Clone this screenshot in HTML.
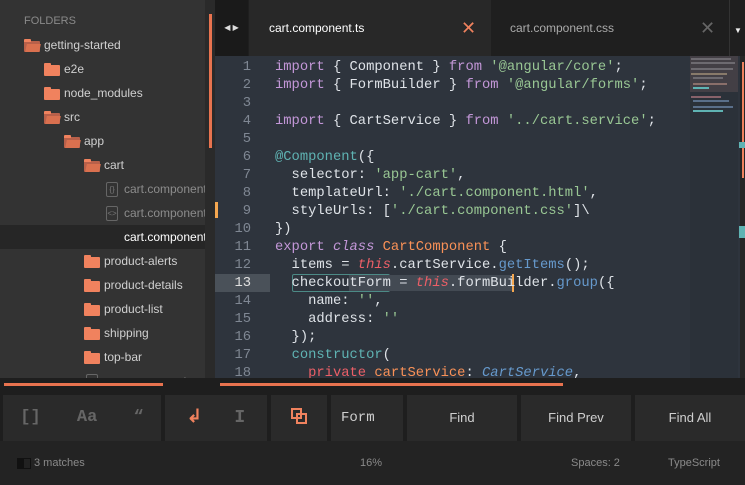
<!DOCTYPE html>
<html><head><style>
*{margin:0;padding:0;box-sizing:border-box}
body{width:745px;height:479px;overflow:hidden;background:#232323;font-family:"Liberation Sans",sans-serif;position:relative}
.abs{position:absolute}
#side{left:0;top:0;width:205px;height:382px;background:#333333;overflow:hidden}
.row{position:absolute;left:0;width:205px;height:24px;font-size:12px;color:#d0d0d0;white-space:nowrap;line-height:24px}
.fold{position:absolute;top:8px;width:16px;height:11px;background:#f0825e;border-radius:1px}
.fold:before{content:"";position:absolute;left:0;top:-2px;width:7px;height:3px;background:#f0825e;border-radius:1px 1px 0 0}
.open{background:#b8604a}
.open:after{content:"";position:absolute;left:2px;top:3px;width:14px;height:8px;background:#d9704f;transform:skewX(-12deg)}
.file{position:absolute;top:5px;width:12px;height:15px;border:1px solid #666;border-radius:2px;font-size:8px;color:#777;text-align:center;line-height:13px}
#code{left:215px;top:56px;width:530px;height:322px;background:#2e343d;overflow:hidden}
.ln{position:absolute;left:0;width:36px;text-align:right;font-family:"Liberation Mono",monospace;font-size:13.8px;color:#7f8793}
.cl{position:absolute;left:60px;font-family:"Liberation Mono",monospace;font-size:13.8px;color:#dfe3e8;white-space:pre}
.k{color:#c397d8}.s{color:#99c794}.r{color:#ec5f67;font-style:italic}.o{color:#f99157}.t{color:#5fb3b3}.b{color:#6699cc}.bi{color:#6699cc;font-style:italic}.p{color:#ec5f67}
.btn{position:absolute;top:395px;height:46px;background:#2a2a2a}
.bt{color:#cfcfcf;font-size:13px;text-align:center;line-height:46px}
.mm{position:absolute;height:2px;background:#6d6a70}
</style></head><body>
<div id="side" class="abs">
<div class="row" style="top:9px;left:24px;color:#8a8a8a;font-size:11px">FOLDERS</div>
<div class="row" style="top:33px"><div class="fold open" style="left:24px"></div><span style="position:absolute;left:44px">getting-started</span></div>
<div class="row" style="top:57px"><div class="fold" style="left:44px"></div><span style="position:absolute;left:64px">e2e</span></div>
<div class="row" style="top:81px"><div class="fold" style="left:44px"></div><span style="position:absolute;left:64px">node_modules</span></div>
<div class="row" style="top:105px"><div class="fold open" style="left:44px"></div><span style="position:absolute;left:64px">src</span></div>
<div class="row" style="top:129px"><div class="fold open" style="left:64px"></div><span style="position:absolute;left:84px">app</span></div>
<div class="row" style="top:153px"><div class="fold open" style="left:84px"></div><span style="position:absolute;left:104px">cart</span></div>
<div class="row" style="top:177px;color:#8c8c8c"><div class="file" style="left:106px">{}</div><span style="position:absolute;left:124px">cart.component.css</span></div>
<div class="row" style="top:201px;color:#8c8c8c"><div class="file" style="left:106px">&lt;&gt;</div><span style="position:absolute;left:124px">cart.component.html</span></div>
<div class="row" style="top:225px;background:#262626;color:#fff"><span style="position:absolute;left:124px">cart.component.ts</span></div>
<div class="row" style="top:249px"><div class="fold" style="left:84px"></div><span style="position:absolute;left:104px">product-alerts</span></div>
<div class="row" style="top:273px"><div class="fold" style="left:84px"></div><span style="position:absolute;left:104px">product-details</span></div>
<div class="row" style="top:297px"><div class="fold" style="left:84px"></div><span style="position:absolute;left:104px">product-list</span></div>
<div class="row" style="top:321px"><div class="fold" style="left:84px"></div><span style="position:absolute;left:104px">shipping</span></div>
<div class="row" style="top:345px"><div class="fold" style="left:84px"></div><span style="position:absolute;left:104px">top-bar</span></div>
<div class="row" style="top:369px;color:#777"><div class="file" style="left:86px">{}</div><span style="position:absolute;left:104px">app.component.css</span></div>
</div>
<div class="abs" style="left:205px;top:0;width:10px;height:382px;background:#2a2a2a"></div>
<div class="abs" style="left:209px;top:14px;width:3px;height:134px;background:#e8734f"></div>
<!-- tabs -->
<div class="abs" style="left:215px;top:0;width:530px;height:56px;background:#1f1f1f"></div>
<div class="abs" style="left:215px;top:0;width:33px;height:56px;background:#1a1a1a;color:#ddd;font-size:8px;line-height:56px;text-align:center">◀ ▶</div>
<div class="abs" style="left:249px;top:0;width:242px;height:56px;background:#282828;color:#fff;font-size:12px;line-height:56px;padding-left:20px">cart.component.ts<span style="position:absolute;left:212px;color:#f0825e;font-size:18px">✕</span></div>
<div class="abs" style="left:510px;top:0;color:#aaa;font-size:12px;line-height:56px">cart.component.css</div>
<div class="abs" style="left:700px;top:0;color:#666;font-size:18px;line-height:56px">✕</div>
<div class="abs" style="left:729px;top:0;width:1px;height:56px;background:#333"></div>
<div class="abs" style="left:734px;top:26px;color:#eee;font-size:8px">▼</div>
<!-- code -->
<div id="code" class="abs">
<div class="abs" style="left:0;top:218px;width:55px;height:18px;background:#4a5159"></div>
<div class="abs" style="left:0;top:146px;width:3px;height:16px;background:#f5a750"></div>
<div class="abs" style="left:77px;top:218px;width:98px;height:18px;border:1px solid #4c8a86;border-radius:2px"></div>
<div class="abs" style="left:134px;top:219px;width:164px;height:16px;background:#434a53"></div>
<div class="abs" style="left:297px;top:218px;width:2px;height:18px;background:#f5a750"></div>
<div class="abs" style="left:475px;top:0;width:48px;height:322px;background:#2b3139"></div>
<div class="abs" style="left:475px;top:0;width:48px;height:36px;background:#433f45"></div>
<div class="mm" style="left:476px;top:2px;width:40px"></div>
<div class="mm" style="left:476px;top:6px;width:44px"></div>
<div class="mm" style="left:476px;top:12px;width:42px"></div>
<div class="mm" style="left:476px;top:17px;width:36px;background:#887a6a"></div>
<div class="mm" style="left:478px;top:21px;width:30px"></div>
<div class="mm" style="left:478px;top:27px;width:34px;background:#8a6f6a"></div>
<div class="mm" style="left:478px;top:31px;width:16px;background:#5fb3b3"></div>
<div class="mm" style="left:476px;top:40px;width:30px;background:#88626a"></div>
<div class="mm" style="left:478px;top:44px;width:36px;background:#5a6f8a"></div>
<div class="mm" style="left:478px;top:50px;width:40px;background:#5a6f8a"></div>
<div class="mm" style="left:478px;top:54px;width:30px;background:#5fb3b3"></div>
<div class="abs" style="left:525px;top:0;width:5px;height:322px;background:#262626"></div>
<div class="abs" style="left:527px;top:6px;width:2px;height:116px;background:#f0825e"></div>
<div class="abs" style="left:524px;top:86px;width:6px;height:6px;background:#5fb3b3"></div>
<div class="abs" style="left:524px;top:170px;width:6px;height:12px;background:#5fb3b3"></div>
<div style="position:absolute;left:0;top:2px;width:475px;height:340px">
<div class="ln" style="top:2px">1</div><div class="ln" style="top:20px">2</div><div class="ln" style="top:38px">3</div><div class="ln" style="top:56px">4</div><div class="ln" style="top:74px">5</div><div class="ln" style="top:92px">6</div><div class="ln" style="top:110px">7</div><div class="ln" style="top:128px">8</div><div class="ln" style="top:146px">9</div><div class="ln" style="top:164px">10</div><div class="ln" style="top:182px">11</div><div class="ln" style="top:200px">12</div><div class="ln" style="top:218px;color:#e0e0e0">13</div><div class="ln" style="top:236px">14</div><div class="ln" style="top:254px">15</div><div class="ln" style="top:272px">16</div><div class="ln" style="top:290px">17</div><div class="ln" style="top:308px">18</div>
<div class="cl" style="top:2px"><span class="k">import</span> { Component } <span class="k">from</span> <span class="s">'@angular/core'</span>;</div>
<div class="cl" style="top:20px"><span class="k">import</span> { FormBuilder } <span class="k">from</span> <span class="s">'@angular/forms'</span>;</div>
<div class="cl" style="top:56px"><span class="k">import</span> { CartService } <span class="k">from</span> <span class="s">'../cart.service'</span>;</div>
<div class="cl" style="top:92px"><span class="t">@Component</span>({</div>
<div class="cl" style="top:110px">  selector: <span class="s">'app-cart'</span>,</div>
<div class="cl" style="top:128px">  templateUrl: <span class="s">'./cart.component.html'</span>,</div>
<div class="cl" style="top:146px">  styleUrls: [<span class="s">'./cart.component.css'</span>]\</div>
<div class="cl" style="top:164px">})</div>
<div class="cl" style="top:182px"><span class="k">export</span> <span class="k" style="font-style:italic">class</span> <span class="o">CartComponent</span> {</div>
<div class="cl" style="top:200px">  items = <span class="r">this</span>.cartService.<span class="b">getItems</span>();</div>
<div class="cl" style="top:218px">  checkoutForm = <span class="r">this</span>.formBuilder.<span class="b">group</span>({</div>
<div class="cl" style="top:236px">    name: <span class="s">''</span>,</div>
<div class="cl" style="top:254px">    address: <span class="s">''</span></div>
<div class="cl" style="top:272px">  });</div>
<div class="cl" style="top:290px">  <span class="t">constructor</span>(</div>
<div class="cl" style="top:308px">    <span class="p">private</span> <span class="o">cartService</span>: <span class="bi">CartService</span>,</div>
</div>
</div>
<!-- bottom -->
<div class="abs" style="left:0;top:378px;width:745px;height:63px;background:#1e1e1e"></div>
<div class="abs" style="left:4px;top:383px;width:159px;height:3px;background:#e8734f"></div>
<div class="abs" style="left:220px;top:383px;width:343px;height:3px;background:#e8734f"></div>
<div class="btn" style="left:3px;width:158px"><div class="bt" style="color:#666;font-family:'Liberation Mono',monospace;font-size:17px;font-weight:bold;word-spacing:26px">[] Aa “</div></div>
<div class="btn" style="left:165px;width:102px"><div class="bt" style="font-family:'Liberation Mono',monospace;font-size:18px;font-weight:bold"><span style="color:#f0825e">↲</span>&nbsp;&nbsp;&nbsp;<span style="color:#666">I</span></div></div>
<div class="btn" style="left:271px;width:56px"><div class="abs" style="left:20px;top:13px;width:11px;height:11px;border:2px solid #f0825e"></div><div class="abs" style="left:25px;top:18px;width:11px;height:11px;border:2px solid #f0825e"></div></div>
<div class="btn" style="left:331px;width:72px"><div class="bt" style="font-family:'Liberation Mono',monospace;font-size:14px;text-align:left;padding-left:10px">Form</div></div>
<div class="btn" style="left:407px;width:110px"><div class="bt">Find</div></div>
<div class="btn" style="left:521px;width:110px"><div class="bt">Find Prev</div></div>
<div class="btn" style="left:635px;width:110px"><div class="bt">Find All</div></div>
<div class="abs" style="left:0;top:441px;width:745px;height:38px;background:#232323;font-size:11px;color:#8a8a8a;line-height:44px">
<div class="abs" style="left:17px;top:17px;width:14px;height:11px;border:1px solid #111;background:linear-gradient(90deg,#111 50%,#222 50%)"></div>
<span class="abs" style="left:34px">3 matches</span>
<span class="abs" style="left:360px">16%</span>
<span class="abs" style="left:571px">Spaces: 2</span>
<span class="abs" style="left:668px">TypeScript</span>
</div>
</body></html>
